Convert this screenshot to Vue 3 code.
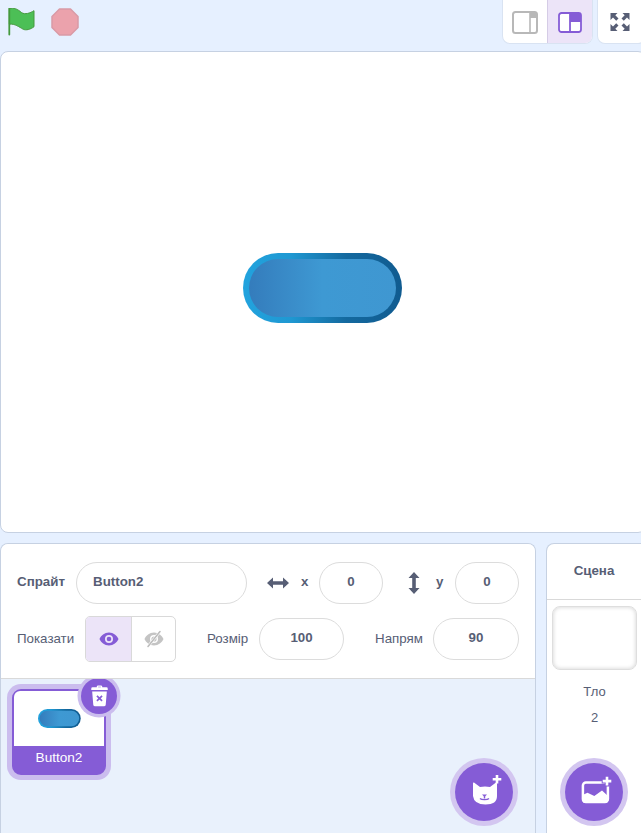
<script setup>
const spriteName = 'Button2'
const x = 0
const y = 0
const size = 100
const direction = 90
const backdropCount = 2
</script>

<template>
<div class="gui">
  <div class="topbar">
    <div class="controls">
      <svg width="28" height="28" viewBox="0 0 28 28">
        <path d="M1.300.6C6-.6 9.500 1 13.700 4.700 17 6.800 22 5.200 26 2.700v16c-3.500 2.800-8 3.800-10.700 2.600C11 19 7 15.500 1.300 16.200z" fill="#4cbf56" stroke="#45993d" stroke-width="1" stroke-linejoin="round"/>
        <path d="M1.300.5v26" stroke="#45993d" stroke-width="1.800" stroke-linecap="round"/>
      </svg>
      <svg width="28" height="28" viewBox="0 0 28 28">
        <path d="M8.500 1h11L27 8.500v11L19.500 27h-11L1 19.500v-11z" fill="#eba2ac" stroke="#d99aa6" stroke-width="1.500" stroke-linejoin="round"/>
      </svg>
    </div>
    <div class="view-btns">
      <div class="seg">
        <div class="seg-btn">
          <svg width="26" height="23" viewBox="0 0 26 23" fill="none">
            <rect x="1" y="1" width="24" height="21" rx="2.500" stroke="#b8b8b8" stroke-width="2" fill="#fff"/>
            <path d="M18 1h4.500A2.500 2.500 0 0 1 25 3.500V7h-7z" fill="#b8b8b8"/>
            <path d="M18 1.500v20" stroke="#b8b8b8" stroke-width="1.600"/>
          </svg>
        </div>
        <div class="seg-btn on">
          <svg width="24" height="21" viewBox="0 0 24 21" fill="none">
            <rect x="1" y="1" width="22" height="19" rx="2.500" stroke="#855cd6" stroke-width="1.800" fill="#fff"/>
            <path d="M12 1h8.500A2.500 2.500 0 0 1 23 3.500V10H12z" fill="#855cd6"/>
            <path d="M12 1v19" stroke="#855cd6" stroke-width="1.800"/>
          </svg>
        </div>
      </div>
      <div class="full">
        <svg width="20" height="20" viewBox="0 0 20 20" fill="#575e75">
          <path d="M.5 1h7L5.300 3.300 8.500 6.500 6.200 8.800 3 5.600.5 8z"/>
          <path d="M19.500 1h-7l2.200 2.300-3.200 3.200 2.300 2.300L17 5.600 19.500 8z"/>
          <path d="M.5 19h7l-2.200-2.300 3.200-3.200-2.300-2.300L3 14.400.5 12z"/>
          <path d="M19.500 19h-7l2.200-2.300-3.200-3.200 2.300-2.300 3.200 3.200 2.500-2.400z"/>
        </svg>
      </div>
    </div>
  </div>

  <div class="stage">
    <svg width="160" height="70" viewBox="0 0 160 70">
      <defs>
        <linearGradient id="pill-ring" x1="0" x2="1" y1="0" y2="0">
          <stop offset="0" stop-color="#22a3de"/>
          <stop offset=".3" stop-color="#1f98d2"/>
          <stop offset=".65" stop-color="#14699f"/>
          <stop offset="1" stop-color="#105b90"/>
        </linearGradient>
        <linearGradient id="pill-fill" x1="0" x2="1" y1="0" y2="0">
          <stop offset="0" stop-color="#347cbc"/>
          <stop offset=".5" stop-color="#3e99d3"/>
          <stop offset="1" stop-color="#3f97d1"/>
        </linearGradient>
      </defs>
      <rect width="159" height="70" rx="35" fill="url(#pill-ring)"/>
      <rect x="6" y="6" width="147" height="58" rx="29" fill="url(#pill-fill)"/>
    </svg>
  </div>

  <div class="bottom">
    <div class="sprite-panel">
      <div class="info">
        <div class="info-row">
          <span class="lbl bold name-lbl">Спрайт</span>
          <div class="field name">{{ spriteName }}</div>
          <svg class="arrow-h" width="22" height="12" viewBox="0 0 22 12" fill="#575e75">
            <path d="M0 6l6-5.500v3.700h10V.5L22 6l-6 5.500V7.800H6v3.700z"/>
          </svg>
          <span class="lbl bold axis">x</span>
          <div class="field small">{{ x }}</div>
          <svg class="arrow-v" width="12" height="22" viewBox="0 0 12 22" fill="#575e75">
            <path d="M6 0l5.500 6H7.800v10h3.700L6 22 .5 16h3.700V6H.5z"/>
          </svg>
          <span class="lbl bold axis">y</span>
          <div class="field small">{{ y }}</div>
        </div>
        <div class="info-row">
          <span class="lbl show-lbl">Показати</span>
          <div class="toggle">
            <div class="tg on">
              <svg width="20" height="14" viewBox="0 0 20 14">
                <path fill-rule="evenodd" d="M10 .5c4.500 0 8 3 9.500 6.500-1.500 3.500-5 6.500-9.500 6.500S2 10.500.5 7C2 3.500 5.500.5 10 .5zM10 3a4 4 0 1 0 0 8 4 4 0 0 0 0-8z" fill="#855cd6"/>
                <circle cx="10" cy="7" r="2.300" fill="#855cd6"/>
              </svg>
            </div>
            <div class="tg">
              <svg width="20" height="18" viewBox="0 0 20 18">
                <path fill-rule="evenodd" d="M10 2.500c4.500 0 8 3 9.500 6.500-1.500 3.500-5 6.500-9.500 6.500S2 12.500.5 9C2 5.500 5.500 2.500 10 2.500zM10 5a4 4 0 1 0 0 8 4 4 0 0 0 0-8z" fill="#c4c4c4"/>
                <circle cx="10" cy="9" r="2.600" fill="#c4c4c4"/>
                <path d="M4 16.500L16 1.500" stroke="#fff" stroke-width="2.800"/>
                <path d="M4 16.500L16 1.500" stroke="#bdbdbd" stroke-width="1.600" stroke-linecap="round"/>
              </svg>
            </div>
          </div>
          <span class="lbl size-lbl">Розмір</span>
          <div class="field mid">{{ size }}</div>
          <span class="lbl dir-lbl">Напрям</span>
          <div class="field mid wide">{{ direction }}</div>
        </div>
      </div>
      <div class="list">
        <div class="thumb">
          <div class="thumb-img">
            <svg width="43" height="19" viewBox="0 0 160 70">
              <rect width="159" height="70" rx="35" fill="url(#pill-ring)"/>
              <rect x="6" y="6" width="147" height="58" rx="29" fill="url(#pill-fill)"/>
            </svg>
          </div>
          <div class="thumb-name">{{ spriteName }}</div>
          <div class="del">
            <svg width="19" height="22" viewBox="0 0 20 24" fill="#fff">
              <path fill-rule="evenodd" d="M7 2.500V2A1.500 1.500 0 0 1 8.500.5h3A1.500 1.500 0 0 1 13 2v.5h4.500A1.500 1.500 0 0 1 19 4v1.500H1V4a1.500 1.500 0 0 1 1.500-1.500zm1.500 0h3V2h-3z"/>
              <path d="M2 7h16l-1.200 14.500a2 2 0 0 1-2 1.800H5.200a2 2 0 0 1-2-1.800z"/>
              <path d="M7.200 11.800l5.600 5.600m0-5.600l-5.600 5.600" stroke="#855cd6" stroke-width="1.800"/>
            </svg>
          </div>
        </div>
        <div class="fab sprite-fab">
          <svg width="36" height="36" viewBox="0 0 36 36" fill="#fff">
            <path d="M8 8.500l6 4.500q5-1 10 0l6-4.500q1-.5 1 1V22q0 8.500-11.500 8.500T7 22V9.500q0-1.500 1-1z"/>
            <path d="M29.700 1h2.600v3h3v2.600h-3v3h-2.600v-3h-3V4h3z"/>
            <path d="M16 20.500h5l-2.500 2.500z" fill="#855cd6"/>
            <path d="M18.500 22v2.500m-4.500 0c1.500 1.500 7.500 1.500 9 0" stroke="#855cd6" stroke-width="1.400" fill="none"/>
          </svg>
        </div>
      </div>
    </div>

    <div class="stage-panel">
      <div class="stage-head">Сцена</div>
      <div class="stage-body">
        <div class="backdrop"></div>
        <div class="bd-label">Тло</div>
        <div class="bd-count">{{ backdropCount }}</div>
        <div class="fab stage-fab">
          <svg width="36" height="36" viewBox="0 0 36 36" fill="none">
            <rect x="6.900" y="8.500" width="25" height="19.500" rx="3" stroke="#fff" stroke-width="2.500"/>
            <path d="M6.500 21l5-2.200 6.800 3.200 7.700-5.400 6 5.400v4.500a2.500 2.500 0 0 1-2.500 2.500H9A2.500 2.500 0 0 1 6.500 26.500z" fill="#fff"/>
            <path d="M29.700 2.800h2.600v3h3v2.600h-3v3h-2.600v-3h-3V5.800h3z" fill="#fff" stroke="#855cd6" stroke-width="2" paint-order="stroke"/>
          </svg>
        </div>
      </div>
    </div>
  </div>
</div>
</template>

<style>
html, body {
  margin: 0;
  background: #e6f0ff;
}
</style>

<style scoped>
.gui {
  width: 641px;
  height: 833px;
  overflow: hidden;
  background: #e6f0ff;
  font-family: "Liberation Sans", Arial, sans-serif;
  color: #575e75;
  font-size: 13.33px;
}
.topbar {
  height: 51px;
  display: flex;
  justify-content: space-between;
  align-items: flex-start;
}
.controls {
  display: flex;
  align-items: center;
  gap: 15px;
  padding: 8px 0 0 8px;
}
.view-btns {
  display: flex;
  gap: 4px;
  width: 144px;
  margin-right: -5px;
}
.seg {
  display: flex;
  width: 91px;
  height: 44px;
  box-sizing: border-box;
  border: 1px solid #d9e3f2;
  border-top: 0;
  border-radius: 0 0 8px 8px;
  overflow: hidden;
  background: #fff;
}
.seg-btn {
  width: 44px;
  display: flex;
  align-items: center;
  justify-content: center;
  padding-top: 1px;
  box-sizing: border-box;
}
.seg-btn.on {
  width: 45px;
  background: #ece4f8;
  border-left: 1px solid #d5cce6;
}
.full {
  flex: 1;
  height: 44px;
  box-sizing: border-box;
  background: #fff;
  border: 1px solid #d9e3f2;
  border-top: 0;
  border-radius: 0 0 8px 8px;
  display: flex;
  align-items: center;
  padding-left: 12px;
}
.stage {
  width: 646px;
  height: 482px;
  box-sizing: border-box;
  background: #fff;
  border: 1px solid #c6d1e2;
  border-radius: 8px;
  display: flex;
  align-items: center;
  justify-content: center;
  padding-bottom: 8px;
  padding-right: 1px;
}
.bottom {
  display: flex;
  gap: 10px;
  margin-top: 10px;
  height: 290px;
}
.sprite-panel {
  width: 536px;
  flex-shrink: 0;
  box-sizing: border-box;
  background: #e9f1fc;
  border: 1px solid #c6d1e2;
  border-bottom: 0;
  border-radius: 8px 8px 0 0;
  display: flex;
  flex-direction: column;
  overflow: hidden;
}
.info {
  background: #fff;
  height: 135px;
  box-sizing: border-box;
  border-bottom: 1px solid #d9d9d9;
  padding: 18px 16px 0 16px;
  display: flex;
  flex-direction: column;
  gap: 14px;
  flex-shrink: 0;
}
.info-row {
  display: flex;
  align-items: center;
  height: 42px;
}
.lbl {
  padding-bottom: 2px;
}
.bold {
  font-weight: bold;
  padding-bottom: 4px;
}
.name-lbl {
  width: 59px;
  flex-shrink: 0;
}
.field {
  height: 42px;
  box-sizing: border-box;
  border: 1px solid #dcdcdc;
  border-radius: 21px;
  display: flex;
  align-items: center;
  justify-content: center;
  font-weight: bold;
  background: #fff;
  padding-bottom: 4px;
}
.field.name {
  width: 171px;
  padding-left: 16px;
  justify-content: flex-start;
}
.field.small {
  width: 64px;
}
.field.mid {
  width: 85px;
}
.field.wide {
  width: 86px;
}
.arrow-h {
  margin-left: 20px;
}
.axis {
  margin-left: 12px;
  width: 18px;
}
.arrow-v {
  margin-left: 25px;
}
.arrow-v + .axis {
  margin-left: 16px;
  width: 19px;
}
.axis:first-of-type {
  width: 19px;
}
.show-lbl {
  width: 68px;
  flex-shrink: 0;
}
.toggle {
  display: flex;
  width: 91px;
  height: 46px;
  flex-shrink: 0;
  box-sizing: border-box;
  border: 1px solid #d9d9d9;
  border-radius: 5px;
  overflow: hidden;
}
.tg {
  flex: 1;
  display: flex;
  align-items: center;
  justify-content: center;
}
.tg.on {
  flex: 0 0 46px;
  box-sizing: border-box;
  background: #ece4f8;
  border-right: 1px solid #d9d9d9;
}
.size-lbl {
  margin-left: 31px;
  width: 52px;
}
.dir-lbl {
  margin-left: 31px;
  width: 58px;
}
.list {
  flex: 1;
  position: relative;
  padding: 10px 6px;
  overflow: hidden;
}
.thumb {
  position: relative;
  width: 94px;
  height: 86px;
  box-sizing: border-box;
  border: 2px solid #855cd6;
  border-radius: 9px;
  box-shadow: 0 0 0 5px #cbbdee;
  background: #855cd6;
  margin-left: 5px;
}
.thumb-img {
  height: 55px;
  background: #fff;
  border-radius: 6px 6px 0 0;
  display: flex;
  align-items: center;
  justify-content: center;
}
.thumb-name {
  color: #fff;
  text-align: center;
  font-size: 13.6px;
  line-height: 24px;
}
.del {
  position: absolute;
  right: -13px;
  top: -13px;
  width: 36px;
  height: 36px;
  background: #855cd6;
  border-radius: 50%;
  box-shadow: 0 0 0 3.5px #cbbdee;
  display: flex;
  align-items: center;
  justify-content: center;
}
.fab {
  position: absolute;
  width: 58px;
  height: 58px;
  background: #855cd6;
  border-radius: 50%;
  box-shadow: 0 0 0 5px #d3c6f0;
  display: flex;
  align-items: center;
  justify-content: center;
}
.fab svg {
  overflow: visible;
}
.sprite-fab {
  right: 22px;
  bottom: 12px;
}
.stage-panel {
  flex: 1;
  min-width: 105px;
  box-sizing: border-box;
  background: #fff;
  border: 1px solid #c6d1e2;
  border-bottom: 0;
  border-radius: 8px 8px 0 0;
  display: flex;
  flex-direction: column;
}
.stage-head {
  height: 55px;
  line-height: 53px;
  font-weight: bold;
  text-align: center;
  padding-right: 9px;
  border-bottom: 1px solid #d9d9d9;
}
.stage-body {
  position: relative;
  flex: 1;
  padding-left: 5px;
}
.backdrop {
  width: 85px;
  height: 64px;
  box-sizing: border-box;
  margin-top: 6px;
  border: 1px solid #dedede;
  border-radius: 8px;
  box-shadow: inset 0 0 4px #d0d0d0;
}
.bd-label, .bd-count {
  width: 85px;
  text-align: center;
  font-size: 13px;
  line-height: 14px;
}
.bd-label {
  margin-top: 15px;
}
.bd-count {
  margin-top: 12px;
}
.stage-fab {
  left: 18px;
  bottom: 12px;
}
</style>
